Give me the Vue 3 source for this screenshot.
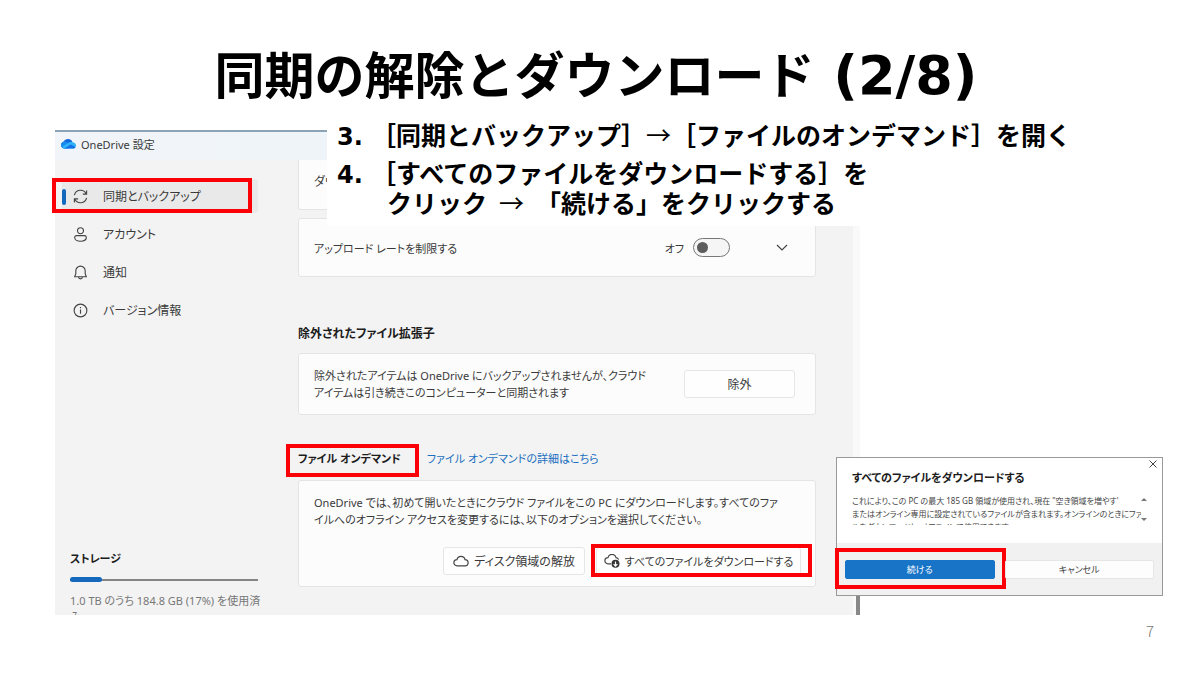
<script setup>
import { ref } from 'vue'

const nav = ['同期とバックアップ', 'アカウント', '通知', 'バージョン情報']
const selected = ref(0)
const limitUpload = ref(false)
const usedPercent = 17
</script>

<template>
  <main class="slide" lang="ja">
    <h1>同期の解除とダウンロード<span class="num">&nbsp;(2/8)</span></h1>

    <div class="stage">
      <section class="app" aria-label="OneDrive 設定">
        <header class="titlebar">
          <svg class="logo" viewBox="0 0 30 20" aria-hidden="true">
            <path d="M7 19C3 19 0 16 0 12c0-3 2-6 5-6.600C7 2 10 0 14 0c5 0 8 3 9 7l-9 12z" fill="#1267dc" />
            <path d="M5 5.400c4-1 8 1 11 4L9 19H7c-4 0-7-3-7-7 0-3 2-6 5-6.600z" fill="#1a8bee" />
            <path d="M8 19c-3 0-5-2-5-4l13-8c2-1 4-1 7-.5 4 .5 7 3 7 6.500 0 3-2 6-6 6z" fill="#2fb3f8" />
            <path d="M7 19l12-8 10 5c-1 2-3 3-5 3z" fill="#1670e8" />
          </svg>
          <span>OneDrive 設定</span>
        </header>

        <div class="columns">
          <aside class="side">
            <nav>
              <button
                v-for="(name, i) in nav"
                :key="name"
                type="button"
                :class="{ active: selected === i }"
                @click="selected = i"
              >
                <svg v-if="i === 0" viewBox="0 0 16 16" aria-hidden="true">
                  <path d="M1.500 6.500A6.700 6.700 0 0 1 14 5M14.500 1.500V5.500H10.500M14.500 9.500A6.700 6.700 0 0 1 2 11M1.500 14.500V10.500H5.500" />
                </svg>
                <svg v-else-if="i === 1" viewBox="0 0 16 16" aria-hidden="true">
                  <circle cx="8" cy="4" r="3.200" />
                  <path d="M3.800 9.200h8.400a2 2 0 0 1 2 2c0 2.600-2.800 4-6.200 4s-6.200-1.400-6.200-4a2 2 0 0 1 2-2z" />
                </svg>
                <svg v-else-if="i === 2" viewBox="0 0 16 16" aria-hidden="true">
                  <path d="M8 1.200a5 5 0 0 0-5 5v3L1.800 12.500h12.400L13 9.200v-3a5 5 0 0 0-5-5zM6 12.800a2 2 0 0 0 4 0" />
                </svg>
                <svg v-else viewBox="0 0 16 16" aria-hidden="true">
                  <circle cx="8" cy="8" r="6.800" />
                  <path d="M8 7v4.500M8 4.300v1.200" />
                </svg>
                <span>{{ name }}</span>
                <i v-if="i === 0" class="mark" />
              </button>
            </nav>
            <div class="storage">
              <h2 id="storage">ストレージ</h2>
              <div class="meter" role="progressbar" aria-labelledby="storage" :aria-valuenow="usedPercent">
                <div :style="{ width: usedPercent + '%' }" />
              </div>
              <p>1.0 TB のうち 184.8 GB (17%) を使用済み</p>
            </div>
          </aside>

          <div class="main">
            <div class="card cut">ダウ</div>
            <div class="card rate">
              <span>アップロード レートを制限する</span>
              <label class="toggle">オフ <input v-model="limitUpload" type="checkbox" /></label>
              <button type="button" class="chevron" aria-label="展開">
                <svg viewBox="0 0 12 8" aria-hidden="true"><path d="M1 1l5 5 5-5" /></svg>
              </button>
            </div>

            <div class="heading"><h2 class="wide">除外されたファイル拡張子</h2></div>
            <div class="card exclude">
              <p>除外されたアイテムは OneDrive にバックアップされませんが、クラウド<br />アイテムは引き続きこのコンピューターと同期されます</p>
              <button type="button" class="btn">除外</button>
            </div>

            <div class="heading">
              <h2 class="marked">ファイル オンデマンド<i class="mark" /></h2>
              <a href="#">ファイル オンデマンドの詳細はこちら</a>
            </div>
            <div class="card demand">
              <p>OneDrive では、初めて開いたときにクラウド ファイルをこの PC にダウンロードします。すべてのファ<br />イルへのオフライン アクセスを変更するには、以下のオプションを選択してください。</p>
              <div class="actions">
                <button type="button" class="btn">
                  <svg viewBox="0 0 16 12" aria-hidden="true"><path d="M4 10.800a3 3 0 0 1 0-6.200 4.100 4.100 0 0 1 8 0 3.100 3.100 0 0 1 0 6.200z" /></svg>
                  ディスク領域の解放
                </button>
                <button type="button" class="btn download">
                  <svg viewBox="0 0 16 14" aria-hidden="true">
                    <path d="M7 9.800H4a3 3 0 0 1 0-6.200 4.100 4.100 0 0 1 8 0 3 3 0 0 1 2.600 2" />
                    <circle cx="11.500" cy="9.800" r="4" class="dot" />
                    <path class="arrow" d="M11.500 7.500v4.400M9.600 10.200l1.900 1.900 1.900-1.900" />
                  </svg>
                  すべてのファイルをダウンロードする
                  <i class="mark" />
                </button>
              </div>
            </div>
          </div>
          <div class="edge" />
        </div>
      </section>

      <ol class="steps">
        <li><span class="num">3.</span><div>［同期とバックアップ］<span class="to">→</span>［ファイルのオンデマンド］を開く</div></li>
        <li>
          <span class="num">4.</span>
          <div>
            <p>［すべてのファイルをダウンロードする］を</p>
            <p class="next">クリック<span class="to spaced">→</span>「続ける」をクリックする</p>
          </div>
        </li>
      </ol>

      <section class="dialog" role="dialog" aria-labelledby="dialog-title">
        <div class="message">
          <button type="button" class="close" aria-label="閉じる">
            <svg viewBox="0 0 8 8" aria-hidden="true"><path d="M.5 .5l7 7M7.500 .5l-7 7" /></svg>
          </button>
          <h2 id="dialog-title">すべてのファイルをダウンロードする</h2>
          <div class="body">
            <p>これにより、この PC の最大 185 GB 領域が使用され、現在 "空き領域を増やす'<br />またはオンライン専用に設定されているファイルが含まれます。オンラインのときにファ<br />ルをダウンロードし、オフラインで使用できます</p>
            <div class="scroll"><i class="up" /><i class="down" /></div>
          </div>
        </div>
        <footer>
          <button type="button" class="primary">続ける<i class="mark" /></button>
          <button type="button">キャンセル</button>
        </footer>
      </section>
    </div>

    <div class="page">7</div>
  </main>
</template>

<style>
body {
  margin: 0;
  background: #fff;
}
</style>

<style scoped>
* {
  box-sizing: border-box;
}
.slide {
  position: relative;
  min-height: 100vh;
  padding: 36px 37px 0 55px;
  background: #fff;
  color: #000;
  font-family: "Noto Sans CJK JP", sans-serif;
}
h1, h2, p, ol {
  margin: 0;
  padding: 0;
}
h1 {
  height: 94px;
  padding-right: 26px;
  font-size: 50px;
  line-height: 72px;
  font-weight: 700;
  text-align: center;
  white-space: nowrap;
}
.num {
  font-family: "DejaVu Sans", sans-serif;
  font-weight: 700;
}
h1 .num {
  font-size: 54px;
}
.stage {
  position: relative;
}
button {
  font: inherit;
  color: inherit;
  border: 0;
  background: none;
  padding: 0;
  white-space: nowrap;
}
svg {
  fill: none;
  stroke: #444;
  stroke-width: 1.200;
  flex: none;
}
.logo {
  stroke: none;
  width: 15px;
  height: 10px;
}
.mark {
  position: absolute;
  border: 4px solid #fb0007;
  pointer-events: none;
}
.app {
  margin-right: 303px;
  border-top: 2px solid #8ba3b5;
  background: #f3f3f3;
  color: #3a3a3a;
  font-family: "Noto Sans", "Noto Sans CJK JP", sans-serif;
  font-feature-settings: "palt";
  font-size: 12px;
}
.titlebar {
  display: flex;
  align-items: center;
  gap: 5px;
  height: 28px;
  padding: 0 0 4px 6px;
  background: linear-gradient(90deg, #f1f5f9, #eaf2f9);
  font-size: 11px;
}
.columns {
  display: flex;
}
.side {
  display: flex;
  flex: none;
  flex-direction: column;
  justify-content: space-between;
  width: 243px;
  padding: 19px 40px 0 7px;
}
nav {
  display: flex;
  flex-direction: column;
  gap: 4px;
}
nav button {
  position: relative;
  display: flex;
  align-items: center;
  gap: 15px;
  height: 34px;
  padding-left: 11px;
  border-radius: 3px;
}
nav svg {
  width: 15px;
  height: 15px;
}
nav .active {
  background: #e9e9e9;
}
nav .active::before {
  content: "";
  position: absolute;
  left: 0;
  top: 10px;
  width: 4px;
  height: 16px;
  border-radius: 2px;
  background: #1469bd;
}
nav .mark {
  inset: -1px 6px 0 -10px;
}
.storage {
  padding-left: 8px;
}
h2 {
  font-size: 11px;
  line-height: 18px;
  font-weight: 600;
  color: #1c1c1c;
}
.wide {
  font-size: 12px;
}
.meter {
  display: flex;
  align-items: center;
  height: 5px;
  margin: 9px 0 11px;
  background: linear-gradient(#858585, #858585) center / 100% 2px no-repeat;
}
.meter div {
  height: 5px;
  border-radius: 3px;
  background: #1469bd;
}
.storage p {
  max-height: 22px;
  margin-right: -10px;
  overflow: hidden;
  font-size: 11px;
  line-height: 16px;
  color: #777;
}
.main {
  flex: 1;
  min-width: 0;
  padding: 0 37px 28px 0;
}
.card {
  border: 1px solid #e4e4e4;
  border-radius: 3px;
  background: #fcfcfc;
  padding: 0 20px 0 15px;
}
.cut {
  height: 50px;
  padding-top: 12px;
  border-top: 0;
  border-radius: 0 0 3px 3px;
  margin-bottom: 8px;
}
.rate {
  display: flex;
  align-items: center;
  height: 59px;
  font-size: 11px;
}
.toggle {
  display: flex;
  align-items: center;
  gap: 9px;
  margin-left: auto;
}
.toggle input {
  appearance: none;
  display: flex;
  align-items: center;
  width: 37px;
  height: 19px;
  margin: 0;
  padding: 0 3px;
  border: 1px solid #777;
  border-radius: 10px;
  background: #f5f5f5;
}
.toggle input::before {
  content: "";
  width: 11px;
  height: 11px;
  border-radius: 50%;
  background: #5c5c5c;
}
.toggle input:checked {
  justify-content: flex-end;
}
.chevron {
  display: flex;
  margin: 0 7px 0 46px;
}
.chevron svg {
  width: 12px;
  height: 8px;
}
.heading {
  display: flex;
  align-items: flex-end;
  gap: 26px;
  height: 65px;
  padding-bottom: 12px;
}
.rate + .heading {
  height: 76px;
  padding-bottom: 10px;
}
.marked {
  position: relative;
}
.marked .mark {
  inset: -6px -18px -9px -12px;
}
.heading a {
  font-size: 11px;
  line-height: 18px;
  color: #1a6fc0;
  text-decoration: none;
}
.card p {
  font-size: 11px;
  line-height: 17px;
  white-space: nowrap;
}
.exclude {
  display: flex;
  align-items: center;
  justify-content: space-between;
  height: 62px;
}
.btn {
  display: flex;
  align-items: center;
  justify-content: center;
  gap: 5px;
  height: 28px;
  border: 1px solid #e6e6e6;
  border-radius: 3px;
  background: #fefefe;
}
.exclude .btn {
  width: 111px;
}
.demand {
  padding-top: 13px;
  padding-bottom: 11px;
}
.actions {
  display: flex;
  justify-content: flex-end;
  gap: 11px;
  margin: 19px -6px 0 0;
}
.actions .btn {
  position: relative;
  width: 142px;
}
.actions .download {
  width: 205px;
  font-size: 11px;
}
.actions svg {
  width: 16px;
  height: 14px;
}
.dot {
  fill: #333;
  stroke: none;
}
.arrow {
  stroke: #fff;
}
.download .mark {
  inset: -4px -12px -3px -6px;
}
.edge {
  width: 7px;
  background: #f9f9f9;
  display: flex;
  align-items: flex-end;
  justify-content: flex-end;
}
.edge::after {
  content: "";
  width: 4px;
  height: 20px;
  background: #888;
}
.steps {
  position: absolute;
  top: -11px;
  left: 272px;
  right: 20px;
  height: 107px;
  padding: 0 0 0 10px;
  background: #fff;
  list-style: none;
  font-size: 25px;
  line-height: 30px;
  font-weight: 700;
  white-space: nowrap;
}
.steps li {
  display: flex;
  align-items: baseline;
  margin-bottom: 5px;
}
.steps .num {
  width: 34px;
  font-size: 24px;
}
.next {
  padding-left: 16px;
}
.to {
  font-weight: 400;
}
.spaced {
  margin: 0 12px;
}
.dialog {
  position: absolute;
  right: 0;
  top: 327px;
  width: 327px;
  border: 1px solid #999;
  background: #f1f1f1;
  color: #444;
  font-family: "Noto Sans", "Noto Sans CJK JP", sans-serif;
  font-feature-settings: "palt";
  font-size: 9px;
}
.message {
  position: relative;
  height: 85px;
  padding: 11px 15px 0;
  background: #fff;
}
.close {
  position: absolute;
  top: 2px;
  right: 5px;
  display: flex;
}
.close svg {
  width: 8px;
  height: 8px;
  stroke-width: 1;
}
.body {
  display: flex;
  height: 31px;
  margin-top: 7px;
}
.body p {
  flex: 1;
  min-width: 0;
  overflow: hidden;
  font-size: 8px;
  line-height: 13px;
  white-space: nowrap;
}
.scroll {
  display: flex;
  flex-direction: column;
  justify-content: space-between;
  padding: 4px 0;
}
.scroll i {
  border: 3px solid transparent;
}
.scroll .up {
  border-top: 0;
  border-bottom-color: #777;
}
.scroll .down {
  border-bottom: 0;
  border-top-color: #777;
}
footer {
  display: flex;
  gap: 10px;
  padding: 17px 8px 16px;
}
footer button {
  position: relative;
  flex: 1;
  height: 19px;
  border: 1px solid #e6e6e6;
  border-radius: 2px;
  background: #fdfdfd;
}
footer .primary {
  border-color: #1874c7;
  background: #1874c7;
  color: #fff;
}
footer .mark {
  inset: -13px -12px -11px -11px;
}
.page {
  position: absolute;
  right: 46px;
  bottom: 35px;
  font-family: "Noto Sans CJK JP", sans-serif;
  font-weight: 300;
  font-size: 15px;
  line-height: 18px;
  color: #777;
}
</style>
